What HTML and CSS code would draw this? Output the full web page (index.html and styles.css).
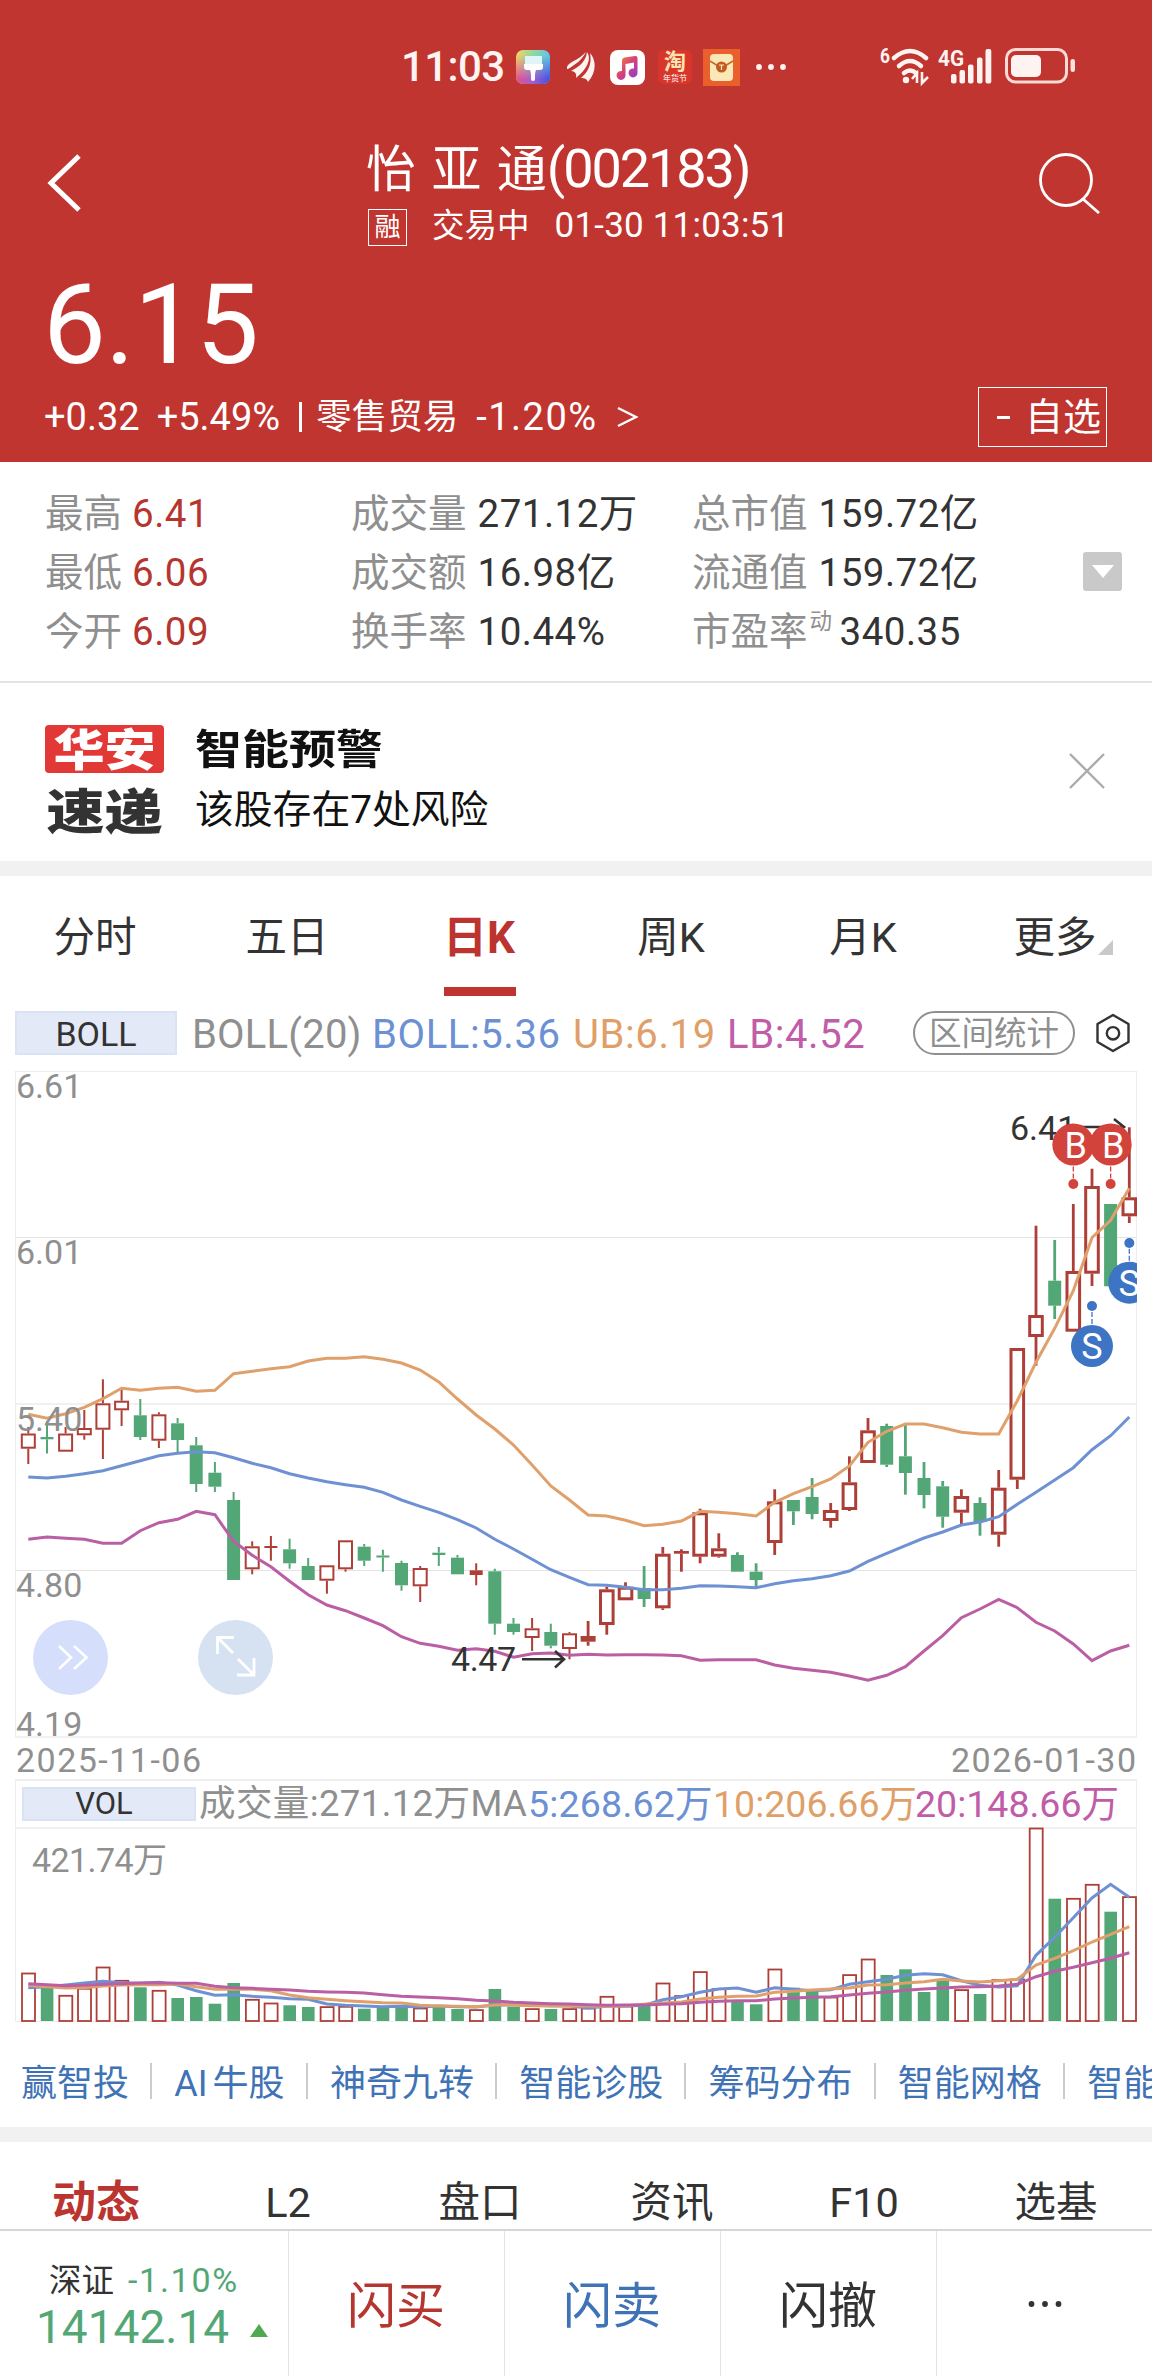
FILE: index.html
```html
<!DOCTYPE html>
<html lang="zh-CN">
<head>
<meta charset="utf-8">
<title>怡亚通(002183)</title>
<link rel="stylesheet" href="styles.css">
</head>
<body>
<header class="header">
  <div class="status">
    <span class="clock">11:03</span>
    <svg class="app app-brush" width="34" height="34" viewBox="0 0 34 34">
      <defs>
        <linearGradient id="g1" x1="0" y1="0" x2="1" y2="0"><stop offset="0" stop-color="#f6d368"/><stop offset=".5" stop-color="#8fd8a0"/><stop offset="1" stop-color="#5cc8f0"/></linearGradient>
        <linearGradient id="g2" x1="0" y1="0" x2="1" y2="0"><stop offset="0" stop-color="#e8508a"/><stop offset=".5" stop-color="#a060d0"/><stop offset="1" stop-color="#4050e0"/></linearGradient>
        <linearGradient id="g3" x1="0" y1="0" x2="0" y2="1"><stop offset=".15" stop-color="#fff" stop-opacity="0"/><stop offset=".85" stop-color="#fff"/></linearGradient>
        <mask id="m1"><rect width="34" height="34" fill="url(#g3)"/></mask>
      </defs>
      <rect width="34" height="34" rx="7" fill="url(#g1)"/>
      <rect width="34" height="34" rx="7" fill="url(#g2)" mask="url(#m1)"/>
      <path d="M9 6h17v8H9z" fill="#dff5f8"/><path d="M8 14h19v3q0 3-3 3h-4q-1 2-1 5v4q0 2-2 2t-2-2v-4q0-3-1-5h-3q-3 0-3-3z" fill="#fff"/>
    </svg>
    <svg class="app app-feather" width="28" height="32" viewBox="0 0 28 32" fill="#fff3f1">
      <path d="M0 18C-1 11 10 11 19 1C15 9 9 13 1 18z"/><path d="M4 20C14 15 19 9 20 1C25 8 20 18 9 27C10 23 8 20 4 20z"/><path d="M14 27C22 20 25 12 23 2C30 10 29 22 21 31C20 28 18 27 14 27z"/>
    </svg>
    <svg class="app app-music" width="35" height="35" viewBox="0 0 35 35">
      <defs><linearGradient id="g4" x1="0" y1="0" x2="1" y2="1"><stop offset="0" stop-color="#f09030"/><stop offset=".5" stop-color="#d84078"/><stop offset="1" stop-color="#8040e0"/></linearGradient></defs>
      <rect width="35" height="35" rx="8" fill="#fff"/>
      <path d="M12 10.500Q12 8 14.500 7.500L25 6Q27.500 5.800 27.500 8V22.500A4.500 4.500 0 1 1 24 18.500V12.500L15.500 14V25A4.500 4.500 0 1 1 12 21z" fill="url(#g4)"/>
    </svg>
    <span class="app app-tao"><b>淘</b><i>年货节</i></span>
    <svg class="app app-ticket" width="37" height="37" viewBox="0 0 37 37">
      <rect width="37" height="37" fill="#ea602c"/><rect x="7" y="5" width="23" height="27" rx="4" fill="#fbe8b8"/>
      <path d="M7 12L18.500 19L30 12" fill="none" stroke="#c06a2a" stroke-width="1.500"/><circle cx="18.500" cy="18" r="5.500" fill="#c25a22"/><path d="M16 16h5M18.500 16v5" stroke="#fbe8b8" stroke-width="1.200"/>
    </svg>
    <svg class="app app-more" width="30" height="6" viewBox="0 0 30 6" fill="#fff3f1"><circle cx="3" cy="3" r="2.900"/><circle cx="15" cy="3" r="2.900"/><circle cx="27" cy="3" r="2.900"/></svg>
    <svg class="signals" width="198" height="44" viewBox="880 45 198 44">
      <g fill="none" stroke="#fff3f1" stroke-width="4.500" stroke-linecap="round">
        <path d="M894 58Q910 44 926 58"/><path d="M899 66Q910 56 921 66"/><path d="M904 73Q910 68 916 73"/>
      </g>
      <circle cx="906" cy="80" r="3.200" fill="#fff3f1"/>
      <path d="M917 83V73L912 79M922 72V83L928 77" fill="none" stroke="#fff3f1" stroke-width="2.600"/>
      <text x="880" y="63" class="sig-text" font-size="21" textLength="10" lengthAdjust="spacingAndGlyphs">6</text>
      <text x="938" y="66" class="sig-text" font-size="22" textLength="26" lengthAdjust="spacingAndGlyphs">4G</text>
      <g fill="#fff3f1"><rect x="951" y="74" width="5.500" height="9.500" rx="2"/><rect x="959.500" y="70" width="5.500" height="13.500" rx="2"/><rect x="968" y="64.500" width="5.500" height="19" rx="2"/><rect x="977" y="57.500" width="5.500" height="26" rx="2"/><rect x="985.500" y="49" width="5.800" height="34.500" rx="2"/></g>
      <rect x="1006.500" y="49.500" width="60" height="32.500" rx="9" fill="none" stroke="#fbd9d5" stroke-width="3"/>
      <rect x="1011" y="55" width="30" height="22" rx="5" fill="#fff3f1"/><rect x="1070.500" y="59" width="4.500" height="13" rx="2.200" fill="#fbe0dd"/>
    </svg>
  </div>
  <div class="nav">
    <svg class="back" width="36" height="60" viewBox="0 0 36 60"><path d="M32 3L4 30L32 57" fill="none" stroke="#fff" stroke-width="5"/></svg>
    <div class="heading">
      <h1 class="name">怡 亚 通<span class="code">(002183)</span></h1>
      <div class="sub"><span class="tag">融</span><span class="state">交易中</span><span class="time">01-30 11:03:51</span></div>
    </div>
    <svg class="search" width="64" height="62" viewBox="0 0 64 62" fill="none" stroke="#fff" stroke-width="2.800"><circle cx="29" cy="28" r="25.500"/><path d="M46 47L62 61"/></svg>
  </div>
  <div class="price">6.15</div>
  <div class="change">
    <span class="diff">+0.32</span><span class="pct">+5.49%</span><span class="bar"></span><span class="sector">零售贸易</span><span class="sector-pct">-1.20%</span>
    <svg class="arrow" width="22" height="22" viewBox="0 0 22 22"><path d="M1 2L19 11L1 20" fill="none" stroke="#fff" stroke-width="2.400"/></svg>
    <span class="fav"><span class="minus"></span>自选</span>
  </div>
</header>

<section class="stats">
  <dl class="col"><div><dt>最高</dt><dd class="up">6.41</dd></div><div><dt>最低</dt><dd class="up">6.06</dd></div><div><dt>今开</dt><dd class="up">6.09</dd></div></dl>
  <dl class="col"><div><dt>成交量</dt><dd>271.12万</dd></div><div><dt>成交额</dt><dd>16.98亿</dd></div><div><dt>换手率</dt><dd>10.44%</dd></div></dl>
  <dl class="col"><div><dt>总市值</dt><dd>159.72亿</dd></div><div><dt>流通值</dt><dd>159.72亿</dd></div><div><dt>市盈率</dt><dd class="pe"><small>动</small>340.35</dd></div></dl>
  <span class="expand"><svg width="22" height="13" viewBox="0 0 22 13"><path d="M0 0H22L11 13z" fill="#fff"/></svg></span>
</section>

<section class="alert">
  <div class="logo"><span class="logo-top"><b>华安</b></span><span class="logo-bottom"><b>速递</b></span></div>
  <div class="alert-text"><strong>智能预警</strong><span>该股存在7处风险</span></div>
  <svg class="close" width="36" height="36" viewBox="0 0 36 36"><path d="M1 1L35 35M35 1L1 35" stroke="#ababab" stroke-width="2.400"/></svg>
</section>

<nav class="tabs">
  <span>分时</span><span>五日</span><span class="on">日K</span><span>周K</span><span>月K</span><span class="more">更多</span>
</nav>

<section class="indicator">
  <span class="chip">BOLL</span>
  <span class="gray">BOLL(20)</span><span class="blue">BOLL:5.36</span><span class="orange">UB:6.19</span><span class="purple">LB:4.52</span>
  <span class="pill">区间统计</span>
  <svg class="gear" width="36" height="40" viewBox="0 0 36 40" fill="none" stroke="#333" stroke-width="2.400"><path d="M18 2L33.500 11V29L18 38L2.500 29V11z" stroke-linejoin="round"/><circle cx="18" cy="20.300" r="6.200"/></svg>
</section>

<svg class="kline" id="kline" width="1152" height="711" viewBox="0 1068 1152 711"></svg>

<section class="vol-head">
  <span class="chip">VOL</span>
  <span class="gray">成交量:271.12万MA</span><span class="blue">5:268.62万</span><span class="orange">10:206.66万</span><span class="purple">20:148.66万</span>
</section>
<svg class="volume" id="volume" width="1152" height="200" viewBox="0 1827 1152 200"></svg>

<nav class="links">
  <span>赢智投</span><span><em>AI</em>牛股</span><span>神奇九转</span><span>智能诊股</span><span>筹码分布</span><span>智能网格</span><span>智能</span>
</nav>

<nav class="subtabs">
  <span class="on">动态</span><span>L2</span><span>盘口</span><span>资讯</span><span>F10</span><span>选基</span>
</nav>

<footer class="footer">
  <div class="index">
    <div class="index-name">深证<span>-1.10%</span></div>
    <div class="index-value">14142.14<svg width="18" height="13" viewBox="0 0 18 13"><path d="M9 0L18 13H0z" fill="#4fa951"/></svg></div>
  </div>
  <span class="act buy">闪买</span><span class="act sell">闪卖</span><span class="act">闪撤</span>
  <span class="act dots"><svg width="34" height="6" viewBox="0 0 34 6" fill="#333"><circle cx="3.500" cy="3" r="2.900"/><circle cx="17" cy="3" r="2.900"/><circle cx="30.500" cy="3" r="2.900"/></svg></span>
</footer>
<script src="chart.js"></script>
</body>
</html>
```
FILE: styles.css
```css
* { box-sizing: border-box; }
body { margin: 0; width: 1152px; height: 2376px; overflow: hidden; background: #fff; color: #333; font-family: Roboto, "Noto Sans CJK SC", sans-serif; font-weight: 400; }
svg { display: block; flex: none; }
span, strong, dt, dd { white-space: nowrap; }
h1, dl, dd { margin: 0; font-weight: 400; }

.header { height: 462px; background: #c0352f; color: #fff; }
.status { display: flex; align-items: center; height: 134px; padding-left: 401px; }
.clock { width: 115px; font-size: 42px; line-height: 42px; font-weight: 500; letter-spacing: -.6px; color: #fff3f1; }
.app { flex: none; }
.app-feather { margin-left: 17px; }
.app-music { margin-left: 15px; }
.app-tao { display: flex; flex-direction: column; align-items: center; width: 34px; height: 34px; margin-left: 13px; border-radius: 6px; background: #d9362b; }
.app-tao b { font-size: 22px; line-height: 24px; font-weight: 700; color: #fbe3b0; }
.app-tao i { font-size: 8px; line-height: 9px; font-style: normal; color: #fff; }
.app-ticket { margin-left: 11px; }
.app-more { margin-left: 16px; }
.signals { margin-left: 94px; }
.sig-text { fill: #fff3f1; font-weight: 700; }

.nav { display: flex; height: 121px; padding-left: 46px; }
.back { margin: 19px 0 0 1px; }
.heading { width: 672px; padding: 4px 0 0 283px; }
.name { font-size: 50px; line-height: 62px; word-spacing: 3px; white-space: nowrap; }
.code { font-size: 54px; letter-spacing: -2.1px; }
.sub { display: flex; align-items: center; height: 38px; margin-top: 7px; margin-left: 2px; }
.tag { flex: none; width: 39px; height: 37px; border: 1.5px solid #fff; font-size: 26px; line-height: 34px; text-align: center; }
.state { margin: -2px 0 0 25px; font-size: 32.500px; line-height: 38px; }
.time { margin: -2px 0 0 25px; font-size: 35px; line-height: 38px; letter-spacing: .2px; }
.search { margin: 18px 0 0 282px; }
.price { height: 120px; margin-top: 10px; padding-left: 43px; font-size: 112px; line-height: 120px; letter-spacing: -.8px; }
.change { display: flex; align-items: center; height: 62px; margin-top: 1px; padding-left: 44px; font-size: 38px; line-height: 62px; }
.pct { margin-left: 17px; }
.bar { width: 3px; height: 30px; margin-left: 19px; background: #fff; }
.sector { margin-left: 14px; font-size: 35.5px; }
.sector-pct { margin-left: 18px; letter-spacing: 1.500px; }
.arrow { margin-left: 19px; }
.fav { display: flex; align-items: center; justify-content: flex-end; width: 129px; height: 60px; margin-left: auto; margin-right: 45px; padding-right: 5px; border: 1.5px solid #fff; font-size: 38px; line-height: 58px; }
.minus { width: 13px; height: 3px; margin-right: 15px; background: #fff; }

.stats { display: flex; height: 221px; padding: 22px 0 0 45px; border-bottom: 2px solid #e4e4e4; font-size: 38.500px; line-height: 60px; }
.col:nth-child(1) { width: 306px; }
.col:nth-child(2) { width: 341px; }
.col:nth-child(3) { width: 391px; }
.col > div { display: flex; height: 59px; }
dt { color: #8f8f8f; }
dd { margin-left: 11px; letter-spacing: .5px; }
.col:nth-child(1) dd { margin-left: 10px; }
.pe { margin-left: 2px; display: flex; }
.pe small { margin-right: 7px; font-size: 22.500px; line-height: 38px; color: #8f8f8f; }
.up { color: #b5352f; }
.expand { display: flex; align-items: center; justify-content: center; width: 39px; height: 39px; margin-top: 68px; border-radius: 3px; background: #c9c9c9; }

.alert { display: flex; height: 193px; padding: 42px 46px 0 45px; border-bottom: 15px solid #f1f1f1; color: #111; }
.logo { width: 119px; text-align: center; }
.logo b { display: block; font-weight: 900; }
.logo-top { display: block; height: 48px; border-radius: 4px; background: #e23836; color: #fff; font-size: 44px; line-height: 52px; }
.logo-top b { transform: scaleX(1.160); }
.logo-bottom { display: block; margin-top: 12px; color: #333; font-size: 48px; line-height: 56px; }
.logo-bottom b { transform: scaleX(1.210); }
.alert-text { width: 320px; margin-left: 31px; }
.alert-text strong { display: block; width: 170px; font-size: 41px; line-height: 50px; transform: scaleX(1.145); transform-origin: 0 0; }
.alert-text span { display: block; margin-top: 9px; font-size: 38.800px; line-height: 51px; }
.close { margin: 28px 1px 0 auto; }

.tabs, .subtabs { display: grid; grid-template-columns: repeat(6, 192px); text-align: center; font-size: 41.500px; }
.tabs { height: 120px; line-height: 124px; }
.tabs span { position: relative; left: -1px; }
.on { color: #bb342f; font-weight: 700; }
.tabs .on { font-size: 44px; }
.tabs .on::after { content: ""; position: absolute; left: 61px; top: 111px; width: 72px; height: 9px; background: #bf342e; }
.more::after { content: ""; position: absolute; left: 139px; top: 64px; border: solid transparent; border-width: 0 0 15px 15px; border-bottom-color: #c9c9c9; }

.indicator { display: flex; align-items: center; height: 72px; padding-left: 15px; padding-top: 2px; font-size: 40px; line-height: 60px; }
.chip { border: 2px solid #d9e3f6; background: #e3e9f6; color: #333; text-align: center; }
.indicator .chip { width: 162px; height: 44px; font-size: 34px; line-height: 42px; }
.indicator .gray, .indicator .blue, .indicator .orange, .indicator .purple { padding-top: 3px; letter-spacing: .6px; }
.indicator .gray { width: 180px; margin-left: 15px; letter-spacing: .2px; }
.indicator .blue { width: 201px; }
.indicator .orange { width: 154px; }
.indicator .purple { width: 186px; }
.gray { color: #8f8f8f; }
.blue { color: #6b90d4; }
.orange { color: #e09f69; }
.purple { color: #c15ca8; }
.pill { width: 162px; height: 44px; border: 2px solid #8f8f8f; border-radius: 22px; color: #8f8f8f; font-size: 32.500px; line-height: 42px; text-align: center; }
.gear { margin-left: 20px; }

.grid-label { font-size: 34px; fill: #8f8f8f; }
.mark-label { font-size: 34px; fill: #333; }
.badge-label { font-size: 36px; fill: #fff; text-anchor: middle; }

.vol-head { display: flex; align-items: center; height: 48px; margin: 0 15px; padding-left: 6px; border: 1px solid #eee; border-top-width: 2px; border-bottom: 0; font-size: 37.500px; line-height: 46px; }
.vol-head .chip { width: 174px; height: 34px; padding-right: 10px; font-size: 31px; line-height: 30px; }
.vol-head .gray { width: 329px; margin-left: 3px; font-size: 36.500px; letter-spacing: .4px; }
.vol-head .blue { width: 185px; letter-spacing: .2px; }
.vol-head .orange { width: 202px; }

.links { display: flex; height: 115px; padding: 36px 0 0 21px; border-bottom: 15px solid #f1f1f1; overflow: hidden; color: #3f73b6; font-size: 36px; line-height: 42px; }
.links span { flex: none; height: 36px; padding-right: 21px; margin-right: 22.300px; border-right: 2px solid #ccc; }
.links em { margin-right: 5px; font-style: normal; }

.subtabs { height: 89px; line-height: 122px; border-bottom: 2px solid #d6d6d6; }
.subtabs .on { font-size: 44px; }

.footer { display: grid; grid-template-columns: 288px repeat(4, 216px); height: 145px; }
.index { padding: 28px 0 0 39px; color: #53a776; }
.index-name { padding-left: 10px; color: #333; font-size: 32.500px; line-height: 43px; }
.index-name span { margin-left: 14px; color: #53a776; font-size: 34px; letter-spacing: 1.700px; }
.index-value { display: flex; align-items: center; font-size: 46px; line-height: 52px; margin: -2px 0 0 -3px; }
.index-value svg { margin: 6px 0 0 21px; }
.act { display: flex; align-items: center; justify-content: center; padding: 0 1px 5px 0; border-left: 1px solid #e4e4e4; font-size: 49px; }
.dots { padding: 0; }
.buy { color: #b5352f; }
.sell { color: #3f73b6; }
```
FILE: chart.js
```js
const RED = '#ad3f38', GREEN = '#53a776', BLUE = '#6e91d3', ORANGE = '#e0a06c', PURPLE = '#bb5fa5';
const X0 = 28.3, STEP = 18.661;
const x = i => X0 + STEP * i;

// direction, high, body top, body bottom, low
const candles = `r 1427 1433.5 1448.7 1464|g 1421 1437 1439.3 1453.5|r 1427 1433.5 1451.7 1451.7|r 1410 1428 1435.3 1439.7|r 1379.3 1403.3 1429.7 1459|r 1390 1400.7 1410.3 1426|g 1399 1415.3 1437 1440|r 1412.3 1414.3 1440.7 1448|g 1418 1423.3 1440 1453.7|g 1437 1445.3 1484 1492|g 1462 1472.7 1486.7 1492|g 1492 1500 1580 1580|r 1541.3 1546.3 1569.3 1574.3|r 1536 1546 1548 1560.7|g 1538.7 1549.3 1563.3 1568.7|g 1558 1566 1580 1580|r 1565.3 1565.3 1580.7 1593.7|r 1540.3 1540.3 1569.3 1571.7|g 1544 1546.7 1560.7 1566|g 1549.7 1555.5 1557.5 1571.7|g 1560.7 1563 1585.3 1590.7|r 1566 1568 1586.3 1602|g 1547 1552.7 1555 1566|g 1555 1557.7 1574.3 1574.3|r 1563.3 1570.3 1575 1585.3|g 1568.7 1571.3 1623.7 1634.7|g 1618 1623.7 1632 1634.7|r 1618 1628.3 1638 1651|g 1623.7 1632 1645.7 1648.3|r 1632 1633.3 1649 1659.3|r 1621 1636 1641.7 1645.7|r 1586.7 1589.3 1625 1634.7|r 1582.3 1586.7 1600.3 1600.3|g 1566 1588 1599 1607|r 1547 1553.7 1608.3 1610|r 1549.3 1551 1553.7 1571.7|r 1508.7 1512.3 1556.7 1563.3|r 1533.3 1548.3 1556.7 1557.7|g 1552.3 1555 1571.7 1571.7|g 1563.3 1571.7 1580 1586.7|r 1489.3 1501.3 1543 1555|g 1500 1500 1511.3 1525|g 1478 1497 1514 1519.3|r 1503 1510 1521 1527.7|r 1456.3 1482.3 1510 1511|r 1418 1430.3 1463 1463|g 1423.7 1426 1464.7 1467|g 1425 1456.3 1473 1494.7|g 1462 1478 1495 1508.3|g 1481 1486.3 1516.7 1527.7|r 1489.3 1496 1512.7 1524.3|g 1497.3 1503 1522 1535.7|r 1470 1487.7 1534.7 1546.7|r 1348 1348 1479.7 1489|r 1225.7 1315 1337 1365.7|g 1240 1280.7 1305.7 1319|r 1204 1271 1331.7 1331.7|r 1168.7 1186 1273.7 1286|g 1204 1204 1286.3 1286.3|r 1127.3 1197.3 1216.3 1223`
  .split('|').map(s => { const [dir, ...v] = s.split(' '); return [dir, ...v.map(Number)]; });

const upper = [1414.3,1418.3,1413.7,1407.3,1398.7,1388.3,1390.3,1388.3,1387.3,1391.3,1390.3,1373.7,1371.3,1368.7,1366.7,1361,1358.3,1358.3,1356.7,1359.3,1363,1370,1382,1399,1415,1429,1445,1465,1486,1500,1515,1516,1520.3,1525.7,1524.3,1521,1511.3,1512.3,1513.7,1516,1502.3,1493.7,1486.7,1479,1466,1442.3,1431.3,1424,1424,1427.7,1432.3,1434,1434,1400.7,1362.3,1328.3,1290.7,1237.7,1220.3,1188.3];
const middle = [1477,1478,1476.3,1473.7,1470.7,1465.7,1460.7,1455.7,1453.3,1451.7,1452.7,1457.7,1463.3,1467.7,1473.7,1478,1481.7,1484.7,1487.3,1492.3,1500,1506.3,1512.3,1519.7,1528,1539.3,1549,1559.3,1569.7,1577.3,1584.7,1585.3,1587.3,1589.7,1589.7,1588.3,1585.7,1586,1586.7,1587.7,1583.7,1580.7,1578.7,1575.7,1571,1561.3,1553.3,1545.7,1538,1532,1525,1522,1516.7,1504.3,1492.3,1480,1467.7,1449.7,1435.7,1417];
const lower = [1539.3,1537,1538.3,1539.3,1543.3,1543.3,1530.7,1522.7,1519.3,1511.3,1514.7,1541.3,1555.3,1566.7,1581.3,1594.7,1605,1610.7,1618,1625.7,1636.7,1643.3,1646.3,1650.3,1648.7,1651.3,1657.3,1653.7,1653,1655.3,1654.3,1655,1654.7,1654.7,1655,1655.7,1660.3,1659.7,1659.7,1659.7,1665,1668.3,1670.3,1672.3,1676,1680.3,1675.3,1666.7,1651,1635.7,1617.7,1609,1599.3,1607.7,1622.3,1631,1644,1660.7,1651,1645.3];

const volTops = [1972.7,1988,1995,1988,1966.7,1980,1987.3,1990,1998,1997,2003.7,1983,1999,2002.7,2005.3,2007,2006.3,2006,2008.7,2007.7,2007.5,2007.7,2006.5,2009,2009.3,1989,2006.7,2008.3,2009,2008.3,2007.7,1996,2005.7,2005,1982.7,1995.3,1971.3,1988.3,2001.7,2004.3,1968.7,1987.7,1991,1996.7,1974.3,1958.7,1975,1969.3,1992,1981,1989.3,1994,1979.3,1978.7,1827.7,1898.7,1898,1884,1911.7,1896.3];
// moving averages, in thirds of a pixel from y = 1760
const ma5 = [683,680,675,669,664,668,670,667,675,692,706,704,709,712,716,718,732,736,738,740,739,741,738,740,741,735,734,736,737,738,744,739,738,736,719,710,697,687,684,697,683,688,692,689,673,665,658,646,641,644,662,676,681,677,586,532,473,414,373,412];
const ma10 = [676,680,684,683,678,675,674,674,672,680,688,688,688,692,705,713,718,722,725,728,729,736,738,739,740,735,735,737,738,738,738,739,737,733,729,726,717,712,709,708,697,694,690,687,684,675,674,669,665,658,663,666,662,658,615,595,572,546,523,500];
const ma20 = [671,674,677,676,673,671,669,668,670,670,679,683,685,688,690,694,696,697,699,704,709,711,713,716,721,723,727,729,731,732,734,736,735,735,733,731,727,724,722,722,717,714,712,710,705,700,696,691,687,684,681,680,678,673,650,634,622,608,595,578];

const poly = (ys, color, w) => `<polyline points="${ys.map((y, i) => x(i).toFixed(1) + ',' + y.toFixed(1)).join(' ')}" fill="none" stroke="${color}" stroke-width="${w}"/>`;
const rect = (l, t, w, h, fill) => `<rect x="${l.toFixed(1)}" y="${t}" width="${w}" height="${h.toFixed(1)}" fill="${fill}"/>`;

function drawCandle([dir, hi, top, bot, lo], i) {
  const c = x(i), color = dir === 'g' ? GREEN : RED, wick = i < 30 ? 2 : 2.8;
  let s = rect(c - wick / 2, hi, wick, top - hi, color) + rect(c - wick / 2, bot, wick, lo - bot, color);
  if (dir === 'g' || bot - top < 7) {
    const wide = dir === 'r' && i >= 30;
    return s + rect(c - (wide ? 7.5 : 6.5), top, wide ? 15 : 13, bot - top, color);
  }
  const sw = i < 30 ? 2 : 3, w = i < 30 ? 15 : 15.6;
  return s + `<rect x="${(c - w / 2 + sw / 2).toFixed(1)}" y="${top + sw / 2}" width="${w - sw}" height="${(bot - top - sw).toFixed(1)}" fill="#fff" stroke="${color}" stroke-width="${sw}"/>`;
}

function badge(i, cy, dot, letter, color) {
  const c = x(i), from = letter === 'B' ? cy + 22 : cy - 22;
  return `<path d="M${c} ${from}V${dot}" stroke="${color}" stroke-width="1.300" stroke-dasharray="5 2"/><circle cx="${c}" cy="${dot}" r="5" fill="${color}"/><circle cx="${c}" cy="${cy}" r="21" fill="${color}"/><text class="badge-label" x="${c + (letter === 'B' ? 2.5 : 0)}" y="${cy + 13}">${letter}</text>`;
}

let k = '<defs><clipPath id="plot"><rect x="15" y="1068" width="1122" height="711"/></clipPath></defs>';
k += '<path d="M15.500 1071V1737M1136.500 1071V1737M15 1071.500H1137" stroke="#ededed" fill="none"/>';
k += '<path d="M15 1237.500H1136M15 1570.500H1136" stroke="#e4e4e4"/><path d="M15 1404H1136M15 1737H1137" stroke="#f1f1f1" stroke-width="2"/>';
k += '<g clip-path="url(#plot)">' + candles.map(drawCandle).join('');
k += poly(middle, BLUE, 3) + poly(upper, ORANGE, 3) + poly(lower, PURPLE, 3);
[['6.61', 1098], ['6.01', 1264], ['5.40', 1430.5], ['4.80', 1596.5], ['4.19', 1735.5]].forEach(([t, y]) => { k += `<text class="grid-label" x="16" y="${y}">${t}</text>`; });
k += '<text class="grid-label" x="16" y="1771.500" textLength="185">2025-11-06</text><text class="grid-label" x="951" y="1771.500" textLength="185">2026-01-30</text>';
k += '<text class="mark-label" x="451" y="1671" textLength="65">4.47</text><text class="mark-label" x="1010" y="1140">6.41</text>';
k += '<path d="M522 1659.300H563M555 1651L564 1659.300L555 1667.500M1078 1127H1123M1114 1119L1124 1127L1114 1135" fill="none" stroke="#333" stroke-width="2.600"/>';
k += badge(56, 1144.5, 1184, 'B', '#d2433c') + badge(58, 1144.5, 1184, 'B', '#d2433c') + badge(57, 1346, 1306, 'S', '#3d74c4') + badge(59, 1282.7, 1243, 'S', '#3d74c4') + '</g>';
k += '<circle cx="70.500" cy="1657.500" r="37.500" fill="#d5dffb"/><path d="M59 1646L71 1657.500L59 1669M74 1646L86.500 1657.500L74 1669" fill="none" stroke="#fff" stroke-width="2.600"/>';
k += '<circle cx="235.500" cy="1657.500" r="37.500" fill="#d6e2f1"/><path d="M217.500 1654V1637.500H234M217.500 1637.500L233 1653M238 1659L254 1675M254 1658V1675H237" fill="none" stroke="#fff" stroke-width="2.800"/>';
document.getElementById('kline').innerHTML = k;

let v = '<path d="M15.500 1827V2021.500H1136.500V1827" stroke="#ededed" fill="none"/><path d="M15 1828H1137" stroke="#f1f1f1" stroke-width="2"/>';
v += '<text class="grid-label" x="32" y="1872" textLength="135">421.74万</text>';
volTops.forEach((top, i) => {
  const c = x(i);
  v += candles[i][0] === 'g' ? rect(c - 6.2, top, 12.6, 2021 - top, GREEN)
    : `<rect x="${(c - 6.3).toFixed(1)}" y="${top + .8}" width="13" height="${(2021 - top - .8).toFixed(1)}" fill="#fff" stroke="${RED}" stroke-width="1.800"/>`;
});
[[ma5, BLUE], [ma10, ORANGE], [ma20, PURPLE]].forEach(([a, c]) => { v += poly(a.map(n => 1760 + n / 3), c, 3); });
document.getElementById('volume').innerHTML = v;
```
